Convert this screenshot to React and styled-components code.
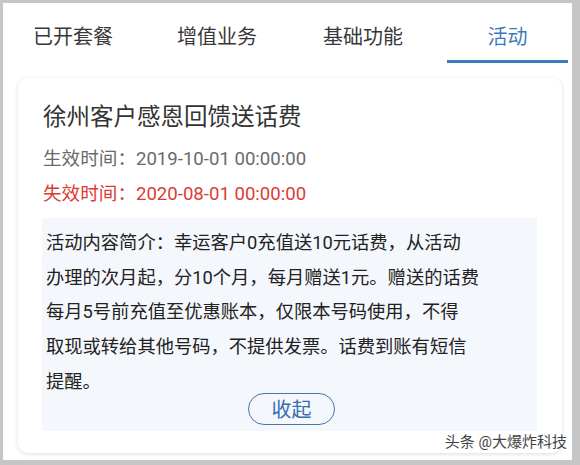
import styled, { createGlobalStyle } from 'styled-components';

const GlobalStyle = createGlobalStyle`
  body {
    margin: 0;
    background: #c6c6c6;
    font-family: Roboto, "Noto Sans CJK SC", sans-serif;
  }
`;

const Frame = styled.div`
  width: 580px;
  height: 465px;
  box-sizing: border-box;
  padding: 3px 8px 5px 3px;
  background: #c6c6c6;
`;

const Screen = styled.div`
  position: relative;
  height: 100%;
  background: #fff;
  display: flex;
  flex-direction: column;
  overflow: hidden;
`;

const TabBar = styled.div`
  height: 59px;
  display: grid;
  grid-template-columns: 140px 148px 144px 1fr;
`;

const Tab = styled.div`
  display: flex;
  flex-direction: column;
  align-items: center;
  padding-left: ${(p) => p.$shift || 0}px;
  cursor: pointer;
`;

const TabLabel = styled.span`
  margin-top: 20px;
  font-size: 20px;
  line-height: 28px;
  color: ${(p) => (p.$active ? '#3b7bbd' : '#383838')};
`;

const Underline = styled.div`
  margin-top: 9px;
  width: 121px;
  height: 2.5px;
  background: ${(p) => (p.$active ? '#3b7bbd' : 'transparent')};
`;

const Card = styled.div`
  flex: 1;
  margin: 16px 10px 7px 15px;
  padding: 23px 25px 0 24px;
  border-radius: 10px;
  background: #fff;
  box-shadow: 0 1px 4px rgba(0, 0, 0, 0.14);
`;

const Title = styled.div`
  padding-left: 1px;
  font-size: 23.5px;
  line-height: 32px;
  color: #333;
`;

const DateRow = styled.div`
  padding-left: 1px;
  margin-top: ${(p) => p.$gap}px;
  font-size: 18.6px;
  line-height: 35px;
  color: ${(p) => (p.$expired ? '#dc3b34' : '#6a6a6a')};
`;

const Intro = styled.div`
  margin-top: 6.5px;
  padding: 8px 0 6px 4px;
  background: #f4f7fc;
  display: flex;
  flex-direction: column;
`;

const IntroText = styled.p`
  margin: 0;
  font-size: 18.3px;
  line-height: 34.7px;
  color: #222;
  white-space: nowrap;
`;

const CollapseButton = styled.button`
  align-self: center;
  margin-top: -7px;
  width: 87px;
  height: 32px;
  padding: 0;
  border: 1.5px solid #4a74ad;
  border-radius: 16px;
  background: transparent;
  font-family: inherit;
  font-size: 20px;
  color: #3a6cb0;
  cursor: pointer;
`;

const Watermark = styled.span`
  position: absolute;
  right: 5px;
  bottom: 8px;
  font-size: 15px;
  line-height: 20px;
  color: #444;
  text-shadow: 0 0 2px #fff;
`;

const tabs = ['已开套餐', '增值业务', '基础功能', '活动'];

const lines = [
  '活动内容简介：幸运客户0充值送10元话费，从活动',
  '办理的次月起，分10个月，每月赠送1元。赠送的话费',
  '每月5号前充值至优惠账本，仅限本号码使用，不得',
  '取现或转给其他号码，不提供发票。话费到账有短信',
  '提醒。',
];

export default function App() {
  return (
    <>
      <GlobalStyle />
      <Frame>
        <Screen>
          <TabBar>
            {tabs.map((t, i) => (
              <Tab key={t} $shift={i === 3 ? 8 : 0}>
                <TabLabel $active={i === 3}>{t}</TabLabel>
                <Underline $active={i === 3} />
              </Tab>
            ))}
          </TabBar>
          <Card>
            <Title>徐州客户感恩回馈送话费</Title>
            <DateRow $gap={8.5}>生效时间：2019-10-01 00:00:00</DateRow>
            <DateRow $gap={0} $expired>失效时间：2020-08-01 00:00:00</DateRow>
            <Intro>
              <IntroText>
                {lines.map((l, i) => (
                  <span key={i}>
                    {l}
                    {i < lines.length - 1 && <br />}
                  </span>
                ))}
              </IntroText>
              <CollapseButton>收起</CollapseButton>
            </Intro>
          </Card>
          <Watermark>头条 @大爆炸科技</Watermark>
        </Screen>
      </Frame>
    </>
  );
}
